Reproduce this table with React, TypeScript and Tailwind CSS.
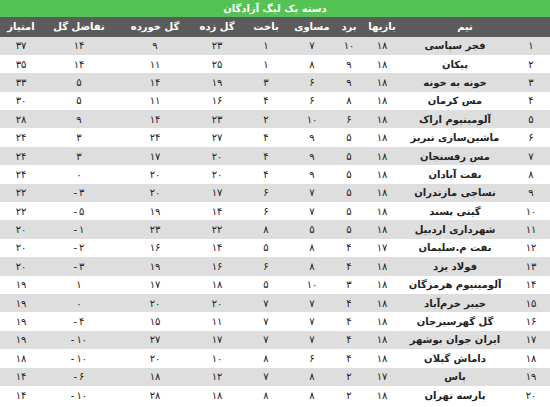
import * as React from "react";

type Row = [string, number, number, number, number, number, number, number, number];

const rows: Row[] = [
  ["فجر سپاسی", 18, 10, 7, 1, 23, 9, 14, 37],
  ["پیکان", 18, 9, 8, 1, 25, 11, 14, 35],
  ["خونه به خونه", 18, 9, 6, 3, 19, 14, 5, 33],
  ["مس کرمان", 18, 8, 6, 4, 16, 11, 5, 30],
  ["آلومینیوم اراک", 18, 6, 10, 2, 23, 14, 9, 28],
  ["ماشین‌سازی تبریز", 18, 5, 9, 4, 27, 24, 3, 24],
  ["مس رفسنجان", 18, 5, 9, 4, 20, 17, 3, 24],
  ["نفت آبادان", 18, 5, 9, 4, 20, 20, 0, 24],
  ["نساجی مازندران", 18, 5, 7, 6, 17, 20, -3, 22],
  ["گیتی پسند", 18, 5, 7, 6, 14, 19, -5, 22],
  ["شهرداری اردبیل", 18, 5, 5, 8, 22, 23, -1, 20],
  ["نفت م.سلیمان", 17, 4, 8, 5, 14, 16, -2, 20],
  ["فولاد یزد", 18, 4, 8, 6, 16, 19, -3, 20],
  ["آلومینیوم هرمزگان", 18, 3, 10, 5, 18, 17, 1, 19],
  ["خیبر خرم‌آباد", 18, 4, 7, 7, 20, 20, 0, 19],
  ["گل گهرسیرجان", 18, 4, 7, 7, 11, 15, -4, 19],
  ["ایران جوان بوشهر", 18, 4, 7, 7, 17, 27, -10, 19],
  ["داماش گیلان", 18, 4, 6, 8, 10, 20, -10, 18],
  ["پاس", 17, 2, 8, 7, 12, 18, -6, 14],
  ["پارسه تهران", 18, 2, 8, 8, 18, 28, -10, 14],
];

const fa = (n: number) => String(Math.abs(n)).replace(/\d/g, (d) => "۰۱۲۳۴۵۶۷۸۹"[+d]);

// rank | team | played | won | drawn | lost | gf | ga | gd | pts  (right to left)
const cols = "grid grid-cols-[38px_114px_32px_34px_40px_52px_46px_78px_74px_42px]";

const headers = ["", "تیم", "بازیها", "برد", "مساوی", "باخت", "گل زده", "گل خورده", "تفاضل گل", "امتیاز"];

function Num({ v }: { v: number }) {
  return (
    <div dir="ltr" className="flex justify-center">
      {v < 0 && <span className="mr-[2px]">-</span>}
      <span>{fa(v)}</span>
    </div>
  );
}

export default function App() {
  return (
    <div dir="rtl" className="w-[550px] h-[407px] bg-white font-['DejaVu_Sans',sans-serif] overflow-hidden">
      <div className="h-[17px] bg-[#55c255] flex items-center justify-center text-white text-[10px] font-bold">
        دسته یک لیگ آزادگان
      </div>
      <div className={`${cols} h-[19.5px] bg-[#5b5b5b] text-white text-[10px] font-bold items-center text-center`}>
        {headers.map((h, i) => (
          <div key={i} className={i === 1 ? "pl-[20px]" : ""}>{h}</div>
        ))}
      </div>
      {rows.map((r, i) => (
        <div
          key={r[0]}
          className={`${cols} h-[18.4px] items-center text-center text-[10px] text-[#222] ${i % 2 === 0 ? "bg-[#dedede]" : "bg-white"}`}
        >
          <div>{fa(i + 1)}</div>
          <div className="font-bold whitespace-nowrap">{r[0]}</div>
          {r.slice(1).map((v, j) => (
            <Num key={j} v={v as number} />
          ))}
        </div>
      ))}
    </div>
  );
}
